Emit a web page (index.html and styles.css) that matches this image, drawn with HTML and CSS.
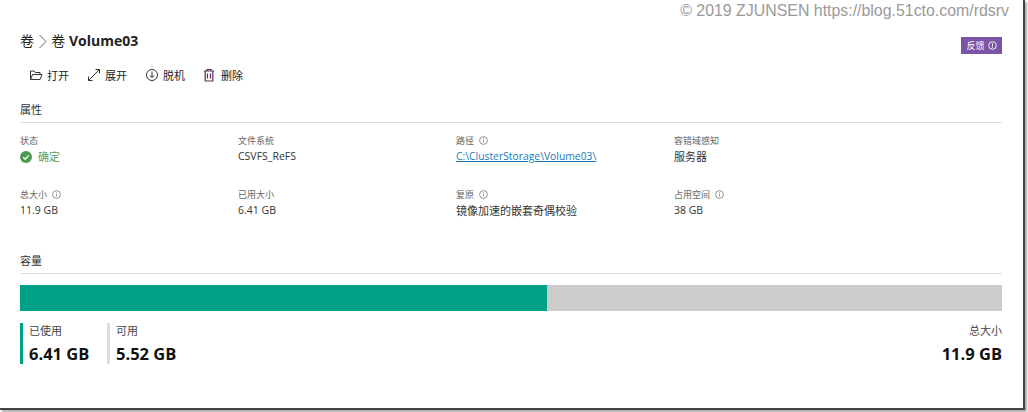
FILE: index.html
```html
<!DOCTYPE html>
<html lang="en">
<head>
    <meta charset="UTF-8">
    <meta name="viewport" content="width=device-width, initial-scale=1.0">
    <title>Volume03</title>
    <link rel="stylesheet" href="styles.css">
</head>
<body>
    <div class="frame">
        <div class="watermark">© 2019 ZJUNSEN https://blog.51cto.com/rdsrv</div>
        <div class="page">
            <div class="title-row">
                <h1 class="title">卷
                    <svg class="crumb" width="10" height="16" viewBox="0 0 10 16"><path d="M1.500 2l6.500 6.500-6.500 6.500" fill="none" stroke="#666" stroke-width="1"/></svg>
                    卷 <b>Volume03</b></h1>
                <div class="feedback">反馈
                    <svg width="9" height="9" viewBox="0 0 9 9"><circle cx="4.500" cy="4.500" r="3.800" fill="none" stroke="#fff" stroke-width=".9"/><path d="M4.500 2.200v3.400M4.500 6.100v.8" stroke="#fff" stroke-width=".9"/></svg>
                </div>
            </div>
            <div class="toolbar">
                <div class="tool">
                    <svg width="14" height="14" viewBox="0 0 14 14"><path d="M1.500 11.500v-8.500h3.500l1.200 1.500h4.800v1.500M1.500 11.500h9.500l2-5h-9.500z" fill="none" stroke="#333" stroke-width="1"/></svg>
                    打开
                </div>
                <div class="tool">
                    <svg width="14" height="14" viewBox="0 0 14 14"><path d="M1.500 12.500l11-11M8.500 1.500h4v4M1.500 8.500v4h4" fill="none" stroke="#333" stroke-width="1"/></svg>
                    展开
                </div>
                <div class="tool">
                    <svg width="14" height="14" viewBox="0 0 14 14"><circle cx="7" cy="7" r="5.500" fill="none" stroke="#333" stroke-width="1"/><path d="M7 3.500v6M4.800 7.400l2.200 2.200 2.200-2.200" fill="none" stroke="#333" stroke-width="1"/></svg>
                    脱机
                </div>
                <div class="tool tool-delete">
                    <svg width="14" height="14" viewBox="0 0 14 14"><path d="M2 3h10M5 3v-1.500h4v1.500M3.200 3v10h7.600v-10" fill="none" stroke="#5c2d5c" stroke-width="1.200"/><path d="M5.500 5.500v5M8.500 5.500v5" stroke="#5c2d5c" stroke-width="1.200"/></svg>
                    删除
                </div>
            </div>

            <h2 class="section-title">属性</h2>
            <div class="props">
                <div class="prop">
                    <div class="prop-label">状态</div>
                    <div class="prop-value cjk status">
                        <svg width="12" height="12" viewBox="0 0 12 12"><circle cx="6" cy="6" r="6" fill="#4a9a50"/><path d="M3.200 6.200l2 2 3.600-3.800" fill="none" stroke="#fff" stroke-width="1.300"/></svg>
                        确定
                    </div>
                </div>
                <div class="prop">
                    <div class="prop-label">文件系统</div>
                    <div class="prop-value">CSVFS_ReFS</div>
                </div>
                <div class="prop">
                    <div class="prop-label">路径 <svg class="info" width="9" height="9" viewBox="0 0 9 9"><circle cx="4.500" cy="4.500" r="3.900" fill="none" stroke="#777" stroke-width=".8"/><path d="M4.500 3.800v2.800M4.500 2.200v.8" stroke="#777" stroke-width=".8"/></svg></div>
                    <div class="prop-value"><a class="link" href="#">C:\ClusterStorage\Volume03\</a></div>
                </div>
                <div class="prop">
                    <div class="prop-label">容错域感知</div>
                    <div class="prop-value cjk">服务器</div>
                </div>
                <div class="prop">
                    <div class="prop-label">总大小 <svg class="info" width="9" height="9" viewBox="0 0 9 9"><circle cx="4.500" cy="4.500" r="3.900" fill="none" stroke="#777" stroke-width=".8"/><path d="M4.500 3.800v2.800M4.500 2.200v.8" stroke="#777" stroke-width=".8"/></svg></div>
                    <div class="prop-value">11.9 GB</div>
                </div>
                <div class="prop">
                    <div class="prop-label">已用大小</div>
                    <div class="prop-value">6.41 GB</div>
                </div>
                <div class="prop">
                    <div class="prop-label">复原 <svg class="info" width="9" height="9" viewBox="0 0 9 9"><circle cx="4.500" cy="4.500" r="3.900" fill="none" stroke="#777" stroke-width=".8"/><path d="M4.500 3.800v2.800M4.500 2.200v.8" stroke="#777" stroke-width=".8"/></svg></div>
                    <div class="prop-value cjk">镜像加速的嵌套奇偶校验</div>
                </div>
                <div class="prop">
                    <div class="prop-label">占用空间 <svg class="info" width="9" height="9" viewBox="0 0 9 9"><circle cx="4.500" cy="4.500" r="3.900" fill="none" stroke="#777" stroke-width=".8"/><path d="M4.500 3.800v2.800M4.500 2.200v.8" stroke="#777" stroke-width=".8"/></svg></div>
                    <div class="prop-value">38 GB</div>
                </div>
            </div>

            <h2 class="section-title">容量</h2>
            <div class="bar">
                <div class="bar-used" style="width: 53.7%"></div>
            </div>
            <div class="legend">
                <div class="stat used">
                    <div class="stat-label">已使用</div>
                    <div class="stat-value">6.41 GB</div>
                </div>
                <div class="stat free">
                    <div class="stat-label">可用</div>
                    <div class="stat-value">5.52 GB</div>
                </div>
                <div class="stat total">
                    <div class="stat-label">总大小</div>
                    <div class="stat-value">11.9 GB</div>
                </div>
            </div>
        </div>
    </div>
</body>
</html>
```
FILE: styles.css
```css
html, body {
    margin: 0;
    height: 100%;
    overflow: hidden;
}
body {
    font-family: "Open Sans", "Noto Sans CJK SC", sans-serif;
    background-color: #fff;
    color: #222;
}
.frame {
    position: relative;
    box-sizing: border-box;
    width: 1025px;
    height: 410px;
    background-color: #fff;
    border-right: 2px solid #444;
    border-bottom: 2px solid #444;
    box-shadow: 2px 2px 2px #aaa;
}
.watermark {
    position: absolute;
    top: 1px;
    right: 14px;
    font-family: "Liberation Sans", sans-serif;
    font-size: 15.900px;
    line-height: 20px;
    color: #9a9a9a;
}
.page {
    padding: 32px 21px 0 20px;
}
.title-row {
    display: flex;
    justify-content: space-between;
    align-items: flex-start;
    height: 32px;
}
.title {
    margin: 0;
    font-size: 14px;
    font-weight: 400;
    line-height: 18px;
    color: #222;
}
.title b {
    font-weight: 700;
}
.crumb {
    vertical-align: -3px;
}
.feedback {
    display: flex;
    align-items: center;
    justify-content: center;
    gap: 3px;
    width: 41px;
    height: 17px;
    margin-top: 5px;
    background-color: #7b54a6;
    color: #fff;
    font-size: 9px;
}
.toolbar {
    display: flex;
    gap: 18px;
    height: 23px;
    padding-left: 9px;
}
.tool {
    display: flex;
    align-items: center;
    gap: 4px;
    height: 22px;
    font-size: 11px;
}
.tool-delete {
    margin-left: -1px;
    gap: 5px;
}
.section-title {
    margin: 0;
    font-size: 11px;
    font-weight: 400;
    line-height: 18px;
    padding-bottom: 3px;
    border-bottom: 1px solid #ddd;
    color: #333;
}
.toolbar + .section-title {
    margin-top: 14px;
}
.props {
    display: grid;
    grid-template-columns: 218px 218px 218px 1fr;
    grid-auto-rows: 54px;
    padding-top: 11px;
    height: 108px;
    margin-bottom: 10px;
}
.prop-label {
    font-size: 9px;
    line-height: 14px;
    color: #666;
}
.info {
    margin-left: 3px;
    vertical-align: -1px;
}
.prop-value {
    font-size: 10.500px;
    line-height: 17px;
    color: #333;
}
.prop-value.cjk {
    font-size: 11px;
}
.status {
    display: flex;
    align-items: center;
    gap: 6px;
}
.prop-value.status {
    color: #5a9e62;
}
.link {
    color: #1a7ab8;
    font-size: 10.350px;
}
.bar {
    height: 26px;
    margin-top: 11px;
    background-color: #ccc;
}
.bar-used {
    height: 100%;
    background-color: #00a287;
}
.legend {
    display: flex;
    margin-top: 12px;
}
.stat {
    box-sizing: border-box;
    height: 41px;
    padding-left: 6px;
    border-left: 3px solid #ddd;
}
.stat.used {
    width: 87px;
    border-left-color: #00a287;
}
.stat.free {
    width: 100px;
}
.stat.total {
    margin-left: auto;
    border-left: 0;
    padding-left: 0;
    width: 100px;
    text-align: right;
}
.stat-label {
    font-size: 11px;
    line-height: 16px;
    color: #444;
}
.stat-value {
    margin-top: 4px;
    font-size: 16.500px;
    line-height: 21px;
    font-weight: 700;
    color: #111;
}
```
